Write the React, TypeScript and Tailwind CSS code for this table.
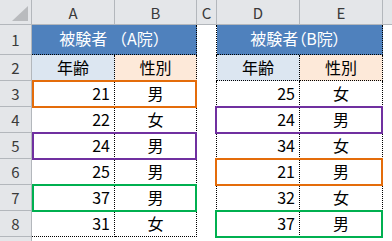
import React from 'react';

// Sheet data for the two tables
const LEFT = [
  ['21', '男'],
  ['22', '女'],
  ['24', '男'],
  ['25', '男'],
  ['37', '男'],
  ['31', '女'],
];

const RIGHT = [
  ['25', '女'],
  ['24', '男'],
  ['34', '女'],
  ['21', '男'],
  ['32', '女'],
  ['37', '男'],
];

// Coloured outlines drawn over the rows
const MARKS = [
  { cls: 'left-[32px] w-[165px] top-[80px] border-[#e46c0a]' },
  { cls: 'left-[32px] w-[165px] top-[132px] border-[#7030a0]' },
  { cls: 'left-[32px] w-[165px] top-[184px] border-[#00b050]' },
  { cls: 'left-[215px] w-[168px] top-[106px] border-[#7030a0]' },
  { cls: 'left-[215px] w-[168px] top-[158px] border-[#e46c0a]' },
  { cls: 'left-[215px] w-[168px] top-[210px] border-[#00b050]' },
];

const colHead =
  'bg-[#e4e6e9] border-r border-b border-[#b3b7bc] flex items-center justify-center text-[15px] text-[#3a3a3a]';
const rowHead =
  'bg-[#e4e6e9] border-r border-b border-[#b3b7bc] flex items-center justify-center text-[15px] text-[#3a3a3a]';
const dot = 'border-black border-dotted';

export default function App() {
  return (
    <div className="relative w-[392px] h-[241px] overflow-hidden bg-white font-['Noto_Sans_CJK_JP',sans-serif] leading-none">
      <div className="grid grid-cols-[32px_83px_82px_20px_83px_83px_1fr] grid-rows-[25px_30px_repeat(7,26px)_4px]">
        {/* Column headers */}
        <div className={colHead}>
          <svg width="31" height="24" viewBox="0 0 31 24">
            <polygon points="28,6 28,21 12,21" fill="#b9bbbe" />
          </svg>
        </div>
        <div className={colHead}>A</div>
        <div className={colHead}>B</div>
        <div className={colHead}>C</div>
        <div className={colHead}>D</div>
        <div className={colHead}>E</div>
        <div className="bg-[#e4e6e9] border-b border-[#b3b7bc]" />

        {/* Row 1 */}
        <div className={rowHead}>1</div>
        <div className={`col-span-2 bg-[#4f81bd] text-white text-[16px] flex items-center justify-center pb-[3px] border-r border-b ${dot}`}>
          被験者 （A院）
        </div>
        <div className={`border-r ${dot}`} />
        <div className={`col-span-2 bg-[#4f81bd] text-white text-[16px] flex items-center justify-center pb-[3px] border-r border-b ${dot} [font-feature-settings:'palt']`}>
          <span className="pr-[8px]">被験者（B院）</span>
        </div>
        <div />

        {/* Row 2 */}
        <div className={rowHead}>2</div>
        <div className={`bg-[#dce6f1] text-[16px] flex items-center justify-center pb-[2px] border-r border-b ${dot}`}>年齢</div>
        <div className={`bg-[#fde9d9] text-[16px] flex items-center justify-center pb-[2px] border-r border-b ${dot}`}>性別</div>
        <div className={`border-r ${dot}`} />
        <div className={`bg-[#dce6f1] text-[16px] flex items-center justify-center pb-[2px] border-r border-b ${dot}`}>年齢</div>
        <div className={`bg-[#fde9d9] text-[16px] flex items-center justify-center pb-[2px] border-r border-b ${dot}`}>性別</div>
        <div />

        {/* Rows 3-8 */}
        {LEFT.map((l, i) => {
          const r = RIGHT[i];
          const last = i === LEFT.length - 1 ? 'border-b' : '';
          return (
            <React.Fragment key={i}>
              <div className={rowHead}>{i + 3}</div>
              <div className={`text-[16px] flex items-center justify-end pr-[4px] pb-[2px] border-r ${last} ${dot}`}>{l[0]}</div>
              <div className={`text-[16px] flex items-center justify-center pb-[2px] border-r ${last} ${dot}`}>{l[1]}</div>
              <div className={`border-r ${dot}`} />
              <div className={`text-[16px] flex items-center justify-end pr-[4px] pb-[2px] border-r ${last} ${dot}`}>{r[0]}</div>
              <div className={`text-[16px] flex items-center justify-center pb-[2px] border-r ${last} ${dot}`}>{r[1]}</div>
              <div />
            </React.Fragment>
          );
        })}

        {/* Top sliver of row 9 */}
        <div className="bg-[#e4e6e9] border-r border-[#b3b7bc]" />
        <div />
        <div />
        <div />
        <div />
        <div />
        <div />
      </div>

      {MARKS.map((m, i) => (
        <div key={i} className={`absolute h-[28px] border-2 ${m.cls}`} />
      ))}
    </div>
  );
}
